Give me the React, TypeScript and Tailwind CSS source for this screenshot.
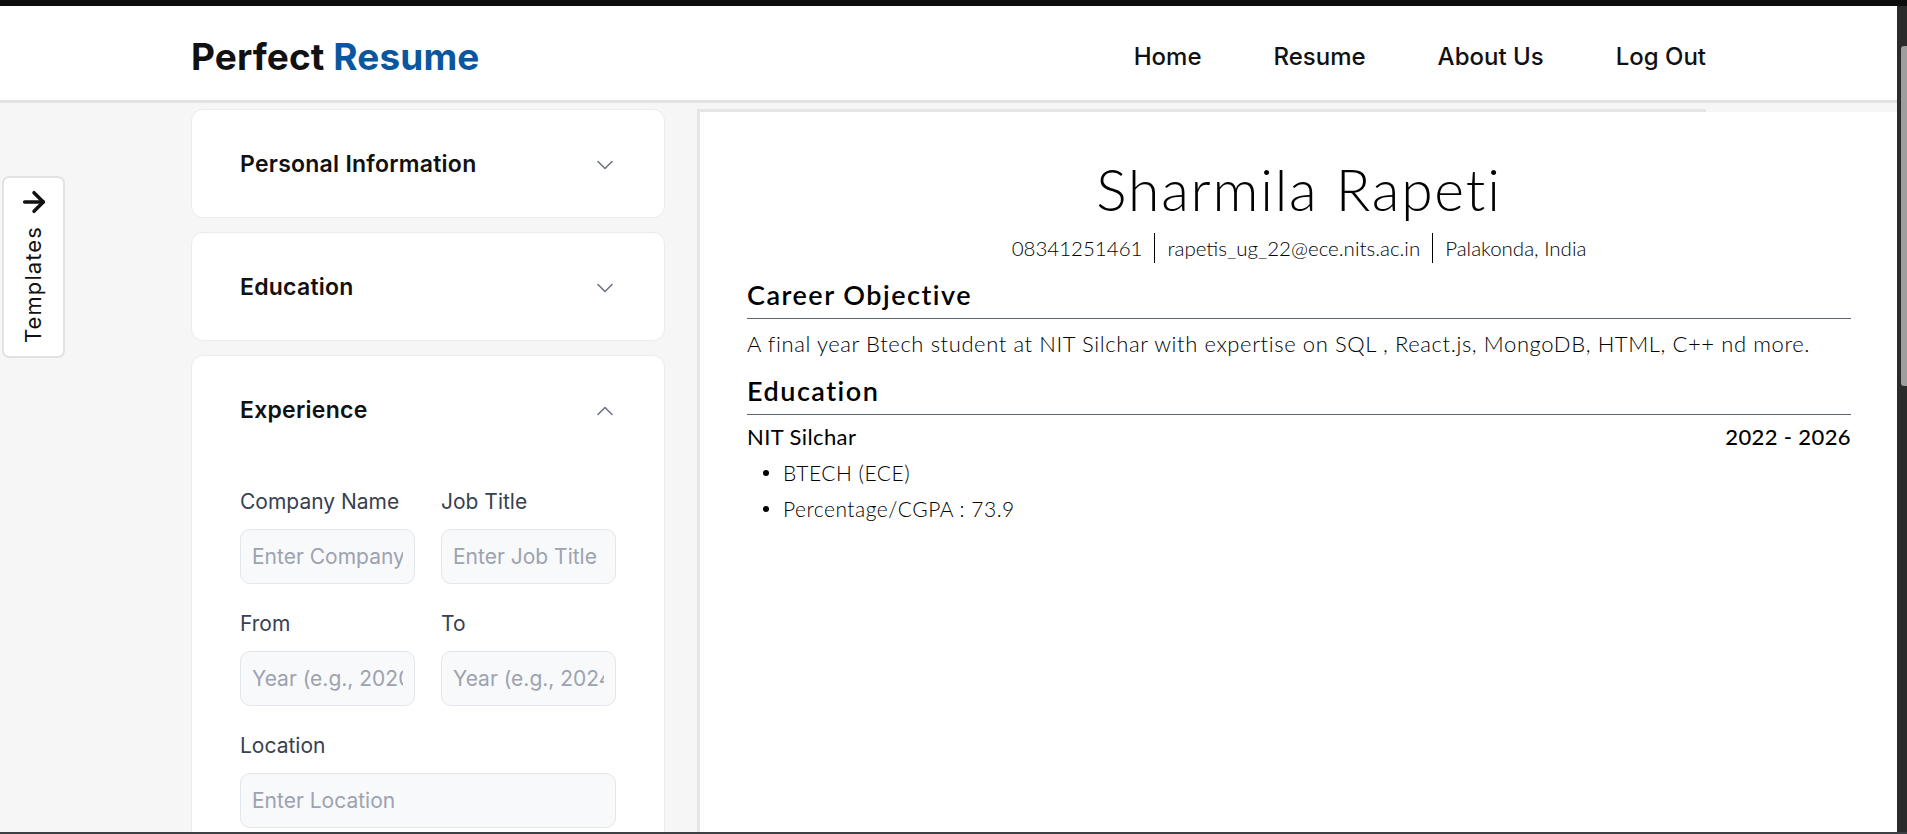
import { ArrowRight, ChevronDown, ChevronUp } from "lucide-react";

const ui = { fontFamily: "Inter, 'Liberation Sans', sans-serif" };
const paper = { fontFamily: "Lato, 'Open Sans', sans-serif" };

function Section({ title, open }: { title: string; open?: boolean }) {
  return (
    <div className="flex h-[107px] items-center justify-between pl-[48px] pr-[45px] pt-[2px]">
      <h3 className="text-[23px] font-semibold tracking-[0.25px] text-[#111]">{title}</h3>
      {open ? (
        <ChevronUp size={28} strokeWidth={1.3} className="text-[#6b7280]" />
      ) : (
        <ChevronDown size={28} strokeWidth={1.3} className="text-[#6b7280]" />
      )}
    </div>
  );
}

function Field({ label, placeholder, wide }: { label: string; placeholder: string; wide?: boolean }) {
  return (
    <div className={wide ? "col-span-2 flex flex-col" : "flex flex-col"}>
      <label className="mb-[13px] text-[21px] leading-[28px] text-[#374151]">{label}</label>
      <input
        placeholder={placeholder}
        className="h-[55px] w-full rounded-[10px] border border-[#e3e6ea] bg-[#f8f9fb] px-[11px] text-[21px] placeholder:text-[#9ca3af] outline-none"
        style={ui}
      />
    </div>
  );
}

function Templates() {
  return (
    <div className="absolute left-[2px] top-[73px] flex w-[63px] flex-col items-center rounded-[7px] border-2 border-[#e2e2e2] bg-white pb-[13px] pt-[8px]">
      <ArrowRight size={32} strokeWidth={2.6} className="text-[#111]" />
      <span className="mt-[8px] rotate-180 text-[22px] tracking-[1.1px] text-[#111] [writing-mode:vertical-rl]">Templates</span>
    </div>
  );
}

function Resume() {
  return (
    <div className="min-h-[900px] w-[1198px] bg-white px-[47px] pt-[43px] text-black" style={paper}>
      <h1 className="text-center text-[57px] font-light leading-[1.2] tracking-[1.8px]">Sharmila Rapeti</h1>
      <div className="mt-[10px] flex items-center justify-center text-[20.5px] font-light">
        <span className="flex h-[30px] items-center pr-[12px]">08341251461</span>
        <span className="flex h-[30px] items-center border-l border-black px-[12px]">rapetis_ug_22@ece.nits.ac.in</span>
        <span className="flex h-[30px] items-center border-l border-black pl-[12px]">Palakonda, India</span>
      </div>

      <h2 className="mt-[16px] border-b border-[#5b6370] pb-[6px] text-[27px] font-semibold leading-[1.2] tracking-[1.5px]">Career Objective</h2>
      <p className="mt-[12px] text-[22px] font-light leading-[1.2] tracking-[0.6px]">
        A final year Btech student at NIT Silchar with expertise on SQL , React.js, MongoDB, HTML, C++ nd more.
      </p>

      <h2 className="mt-[18px] border-b border-[#5b6370] pb-[6px] text-[27px] font-semibold leading-[1.2] tracking-[1.5px]">Education</h2>
      <div className="mt-[9px] flex items-center justify-between text-[22px] leading-[1.2]">
        <span className="tracking-[0.4px]">NIT Silchar</span>
        <span className="font-medium tracking-[0.4px]">2022 - 2026</span>
      </div>
      <ul className="mt-[5px] text-[21px] font-light tracking-[0.5px]">
        {["BTECH (ECE)", "Percentage/CGPA : 73.9"].map((item) => (
          <li key={item} className="flex h-[36px] items-center">
            <span className="ml-[16px] mr-[14px] h-[6px] w-[6px] rounded-full bg-black" />
            {item}
          </li>
        ))}
      </ul>
    </div>
  );
}

export default function App() {
  return (
    <div className="flex h-[834px] w-[1907px] flex-col overflow-hidden bg-[#0d0d0d]" style={ui}>
      <div className="h-[6px] shrink-0" />
      <div className="flex min-h-0 flex-1">
        <div className="flex min-w-0 flex-1 flex-col overflow-hidden bg-[#f6f6f6]">
          <header className="h-[97px] shrink-0 border-b-[3px] border-[#e3e3e3] bg-white">
            <div className="mx-auto flex h-full w-[1515px] items-center justify-between pt-[7px]">
              <div className="text-[37px] font-bold tracking-[0.1px] text-[#111]">
                Perfect <span className="text-[#0a57a0]">Resume</span>
              </div>
              <nav className="flex gap-[72px] text-[24px] font-medium text-[#111]">
                <a>Home</a>
                <a>Resume</a>
                <a>About Us</a>
                <a>Log Out</a>
              </nav>
            </div>
          </header>

          <div className="relative min-h-0 flex-1">
            <Templates />
            <div className="mx-auto flex w-[1515px] gap-[32px] pt-[6px]">
              <aside className="flex w-[474px] shrink-0 flex-col gap-[14px]">
                <div className="rounded-[12px] border border-[#ebebeb] bg-white">
                  <Section title="Personal Information" />
                </div>
                <div className="rounded-[12px] border border-[#ebebeb] bg-white">
                  <Section title="Education" />
                </div>
                <div className="rounded-[12px] border border-[#ebebeb] bg-white pb-[40px]">
                  <Section title="Experience" open />
                  <div className="mt-[25px] grid grid-cols-2 gap-x-[26px] gap-y-[26px] px-[48px]">
                    <Field label="Company Name" placeholder="Enter Company Name" />
                    <Field label="Job Title" placeholder="Enter Job Title" />
                    <Field label="From" placeholder="Year (e.g., 2020)" />
                    <Field label="To" placeholder="Year (e.g., 2024)" />
                    <Field label="Location" placeholder="Enter Location" wide />
                  </div>
                </div>
              </aside>
              <main className="min-w-0 flex-1 border-l-[3px] border-t-[3px] border-[#e5e5e5]">
                <Resume />
              </main>
            </div>
          </div>
        </div>
        <div className="relative w-[10px] shrink-0 bg-[#2b2b2b]">
          <div className="absolute left-[4px] right-0 top-[40px] h-[340px] rounded-l-[3px] bg-[#9e9e9e]" />
        </div>
      </div>
      <div className="h-[2px] shrink-0 bg-[#3c4043]" />
    </div>
  );
}
